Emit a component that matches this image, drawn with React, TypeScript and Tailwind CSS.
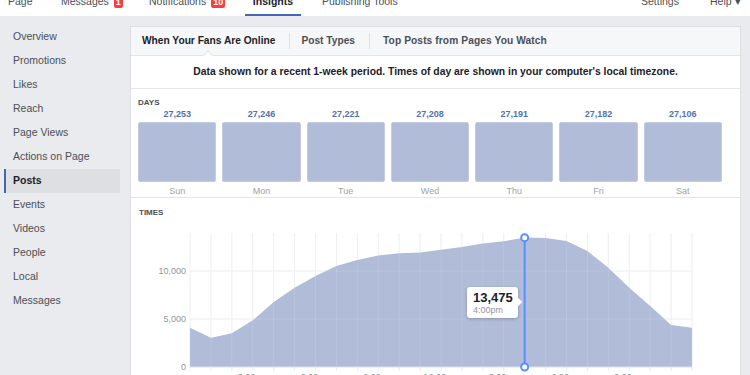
import React from "react";

const FONT = { fontFamily: '"Liberation Sans", Arial, Helvetica, sans-serif' };

const SIDEBAR = [
  "Overview", "Promotions", "Likes", "Reach", "Page Views", "Actions on Page",
  "Posts", "Events", "Videos", "People", "Local", "Messages",
];

const DAYS = [
  { day: "Sun", value: "27,253" },
  { day: "Mon", value: "27,246" },
  { day: "Tue", value: "27,221" },
  { day: "Wed", value: "27,208" },
  { day: "Thu", value: "27,191" },
  { day: "Fri", value: "27,182" },
  { day: "Sat", value: "27,106" },
];

// hourly online fans, 12am .. 12am
const HOURS = [
  4094, 3050, 3510, 4860, 6770, 8260, 9480, 10520, 11150, 11630, 11840, 11940,
  12220, 12500, 12880, 13090, 13475, 13440, 13125, 12080, 10340, 8260, 6350, 4375, 4094,
];

const X0 = 190;
const X1 = 692;
const STEP = (X1 - X0) / 24;
const BASE = 366;
const yOf = (v: number) => BASE - (v * 48) / 5000;

function Badge({ n }: { n: string }) {
  return (
    <span className="ml-[5px] mt-[-4px] h-[12px] min-w-[8px] px-[2px] rounded-[2px] bg-[#fa3e3e] text-white text-[9px] font-bold leading-[12px] text-center">
      {n}
    </span>
  );
}

function TopNav() {
  return (
    <div className="h-[16px] bg-white flex text-[10.5px] text-[#4b4f56] overflow-hidden">
      <div className="w-[61px] pl-[8px] flex items-start">
        <span className="mt-[-5px] leading-[12px]">Page</span>
      </div>
      <div className="w-[88px] flex items-start">
        <span className="mt-[-5px] leading-[12px]">Messages</span>
        <Badge n="1" />
      </div>
      <div className="w-[96px] flex items-start">
        <span className="mt-[-5px] leading-[12px]">Notifications</span>
        <Badge n="10" />
      </div>
      <div className="w-[56px] flex items-start justify-center border-b-2 border-[#4267b2]">
        <span className="mt-[-5px] leading-[12px] font-bold text-[#1d2129]">Insights</span>
      </div>
      <div className="pl-[21px] flex items-start">
        <span className="mt-[-5px] leading-[12px]">Publishing Tools</span>
      </div>
      <div className="flex-1" />
      <div className="w-[69px] flex items-start">
        <span className="mt-[-5px] leading-[12px]">Settings</span>
      </div>
      <div className="w-[40px] flex items-start">
        <span className="mt-[-5px] leading-[12px]">Help ▾</span>
      </div>
    </div>
  );
}

function Sidebar() {
  return (
    <div className="w-[130px] shrink-0 pt-[8.5px]">
      {SIDEBAR.map((item) =>
        item === "Posts" ? (
          <div
            key={item}
            className="ml-[4px] w-[116px] h-[24px] pl-[7px] flex items-center bg-[#dddfe2] border-l-2 border-[#4267b2] text-[10.5px] font-bold text-[#1d2129]"
          >
            {item}
          </div>
        ) : (
          <div key={item} className="ml-[4px] w-[116px] h-[24px] pl-[9px] flex items-center text-[10.5px] text-[#4b4f56]">
            {item}
          </div>
        )
      )}
    </div>
  );
}

function Tabs() {
  return (
    <div className="h-[29px] bg-[#f6f7f9] border-b border-[#e5e5e5] flex items-center text-[10.2px] font-bold">
      <div className="relative h-full pl-[11px] pr-[14px] flex items-center text-[#1d2129]">
        When Your Fans Are Online
        <span className="absolute left-1/2 bottom-[-5px] w-[8px] h-[8px] -ml-[6px] rotate-45 bg-white border-l border-t border-[#e5e5e5] z-10" />
      </div>
      <div className="w-px h-[16px] bg-[#dddfe2]" />
      <div className="pl-[11px] pr-[14px] text-[#4b4f56]">Post Types</div>
      <div className="w-px h-[16px] bg-[#dddfe2]" />
      <div className="pl-[13px] text-[#4b4f56] tracking-[0.1px]">Top Posts from Pages You Watch</div>
    </div>
  );
}

function DaysSection() {
  return (
    <div className="pl-[7px] pt-[9px] pb-[1px] border-b border-[#e5e5e5]">
      <div className="text-[8px] font-bold leading-[10px] text-[#4b4f56]">DAYS</div>
      <div className="w-[584px] grid grid-cols-7 gap-x-[6px]">
        {DAYS.map((d) => (
          <div key={d.day} className="flex flex-col items-center">
            <div className="h-[10px] mt-[1px] text-[9px] font-bold leading-[10px] text-[#5571ad]">{d.value}</div>
            <div className="mt-[3px] w-full h-[60px] rounded-[2px] bg-[#b0bcd8] border border-[#c3cce2]" />
            <div className="mt-[4px] h-[10px] text-[9px] leading-[10px] text-[#a0a3a9]">{d.day}</div>
          </div>
        ))}
      </div>
    </div>
  );
}

function TimesChart() {
  const pts = HOURS.map((v, i) => [X0 + i * STEP, yOf(v)] as const);
  const area =
    `M${X0},${BASE} ` + pts.map(([x, y]) => `L${x.toFixed(1)},${y.toFixed(1)}`).join(" ") + ` L${X1},${BASE} Z`;
  const verticals = Array.from({ length: 25 }, (_, i) => X0 + i * STEP);
  const hx = X0 + 16 * STEP;
  const hy = yOf(13475);
  const xLabels = [
    [3, "3:00am"], [6, "6:00am"], [9, "9:00am"], [12, "12:00pm"],
    [15, "3:00pm"], [18, "6:00pm"], [21, "9:00pm"],
  ] as const;

  return (
    <svg width="610" height="160" viewBox="131 217 610 160" className="block">
      {verticals.map((x) => (
        <line key={x} x1={x} y1={232} x2={x} y2={370} stroke="#ebedf0" strokeWidth="1" />
      ))}
      {[270, 318].map((y) => (
        <line key={y} x1={X0} y1={y} x2={X1} y2={y} stroke="#ebedf0" strokeWidth="1" />
      ))}
      <path d={area} fill="#b0bcd8" />
      {verticals.map((x) => (
        <line key={`o${x}`} x1={x} y1={232} x2={x} y2={BASE} stroke="#ffffff" strokeOpacity="0.12" strokeWidth="1" />
      ))}
      {[270, 318].map((y) => (
        <line key={`o${y}`} x1={X0} y1={y} x2={X1} y2={y} stroke="#ffffff" strokeOpacity="0.12" strokeWidth="1" />
      ))}
      <line x1={X0} y1={BASE} x2={X1} y2={BASE} stroke="#dddfe2" strokeWidth="1" />
      <g fill="#90949c" fontSize="9" fontFamily='"Liberation Sans", Arial, sans-serif' textAnchor="end">
        <text x="186" y="273">10,000</text>
        <text x="186" y="321">5,000</text>
        <text x="186" y="369">0</text>
      </g>
      <g fill="#90949c" fontSize="9" fontFamily='"Liberation Sans", Arial, sans-serif' textAnchor="middle">
        {xLabels.map(([h, l]) => (
          <text key={l} x={X0 + h * STEP} y="379">{l}</text>
        ))}
      </g>
      <line x1={hx} y1={hy} x2={hx} y2={BASE} stroke="#5890ff" strokeWidth="2" />
      <circle cx={hx} cy={hy} r="3.5" fill="#fff" stroke="#5890ff" strokeWidth="2" />
      <circle cx={hx} cy={BASE} r="3.5" fill="#fff" stroke="#5890ff" strokeWidth="2" />
    </svg>
  );
}

function TimesSection() {
  return (
    <div className="relative pt-[10px]">
      <div className="pl-[8px] text-[8px] font-bold leading-[10px] text-[#4b4f56]">TIMES</div>
      <TimesChart />
      {/* hover tooltip */}
      <div className="absolute left-[336px] top-[89px] w-[51px] h-[31px] bg-white rounded-[3px] shadow-[0_1px_3px_rgba(0,0,0,0.25)] pl-[6px] pt-[3px]">
        <div className="text-[13px] font-bold leading-[15px] text-[#1d2129]">13,475</div>
        <div className="text-[9px] leading-[11px] text-[#90949c]">4:00pm</div>
        <span className="absolute right-[-3px] top-[12px] w-[6px] h-[6px] rotate-45 bg-white" />
      </div>
    </div>
  );
}

export default function App() {
  return (
    <div className="w-[750px] h-[375px] overflow-hidden bg-[#e9ebee]" style={FONT}>
      <TopNav />
      <div className="flex">
        <Sidebar />
        <div className="mt-[10px] w-[611px] h-[400px] bg-white border border-[#dddfe2] shrink-0">
          <Tabs />
          <div className="h-[33px] border-b border-[#e5e5e5] flex items-center justify-center text-[10.35px] font-bold text-[#1d2129]">
            Data shown for a recent 1-week period. Times of day are shown in your computer's local timezone.
          </div>
          <DaysSection />
          <TimesSection />
        </div>
      </div>
    </div>
  );
}
